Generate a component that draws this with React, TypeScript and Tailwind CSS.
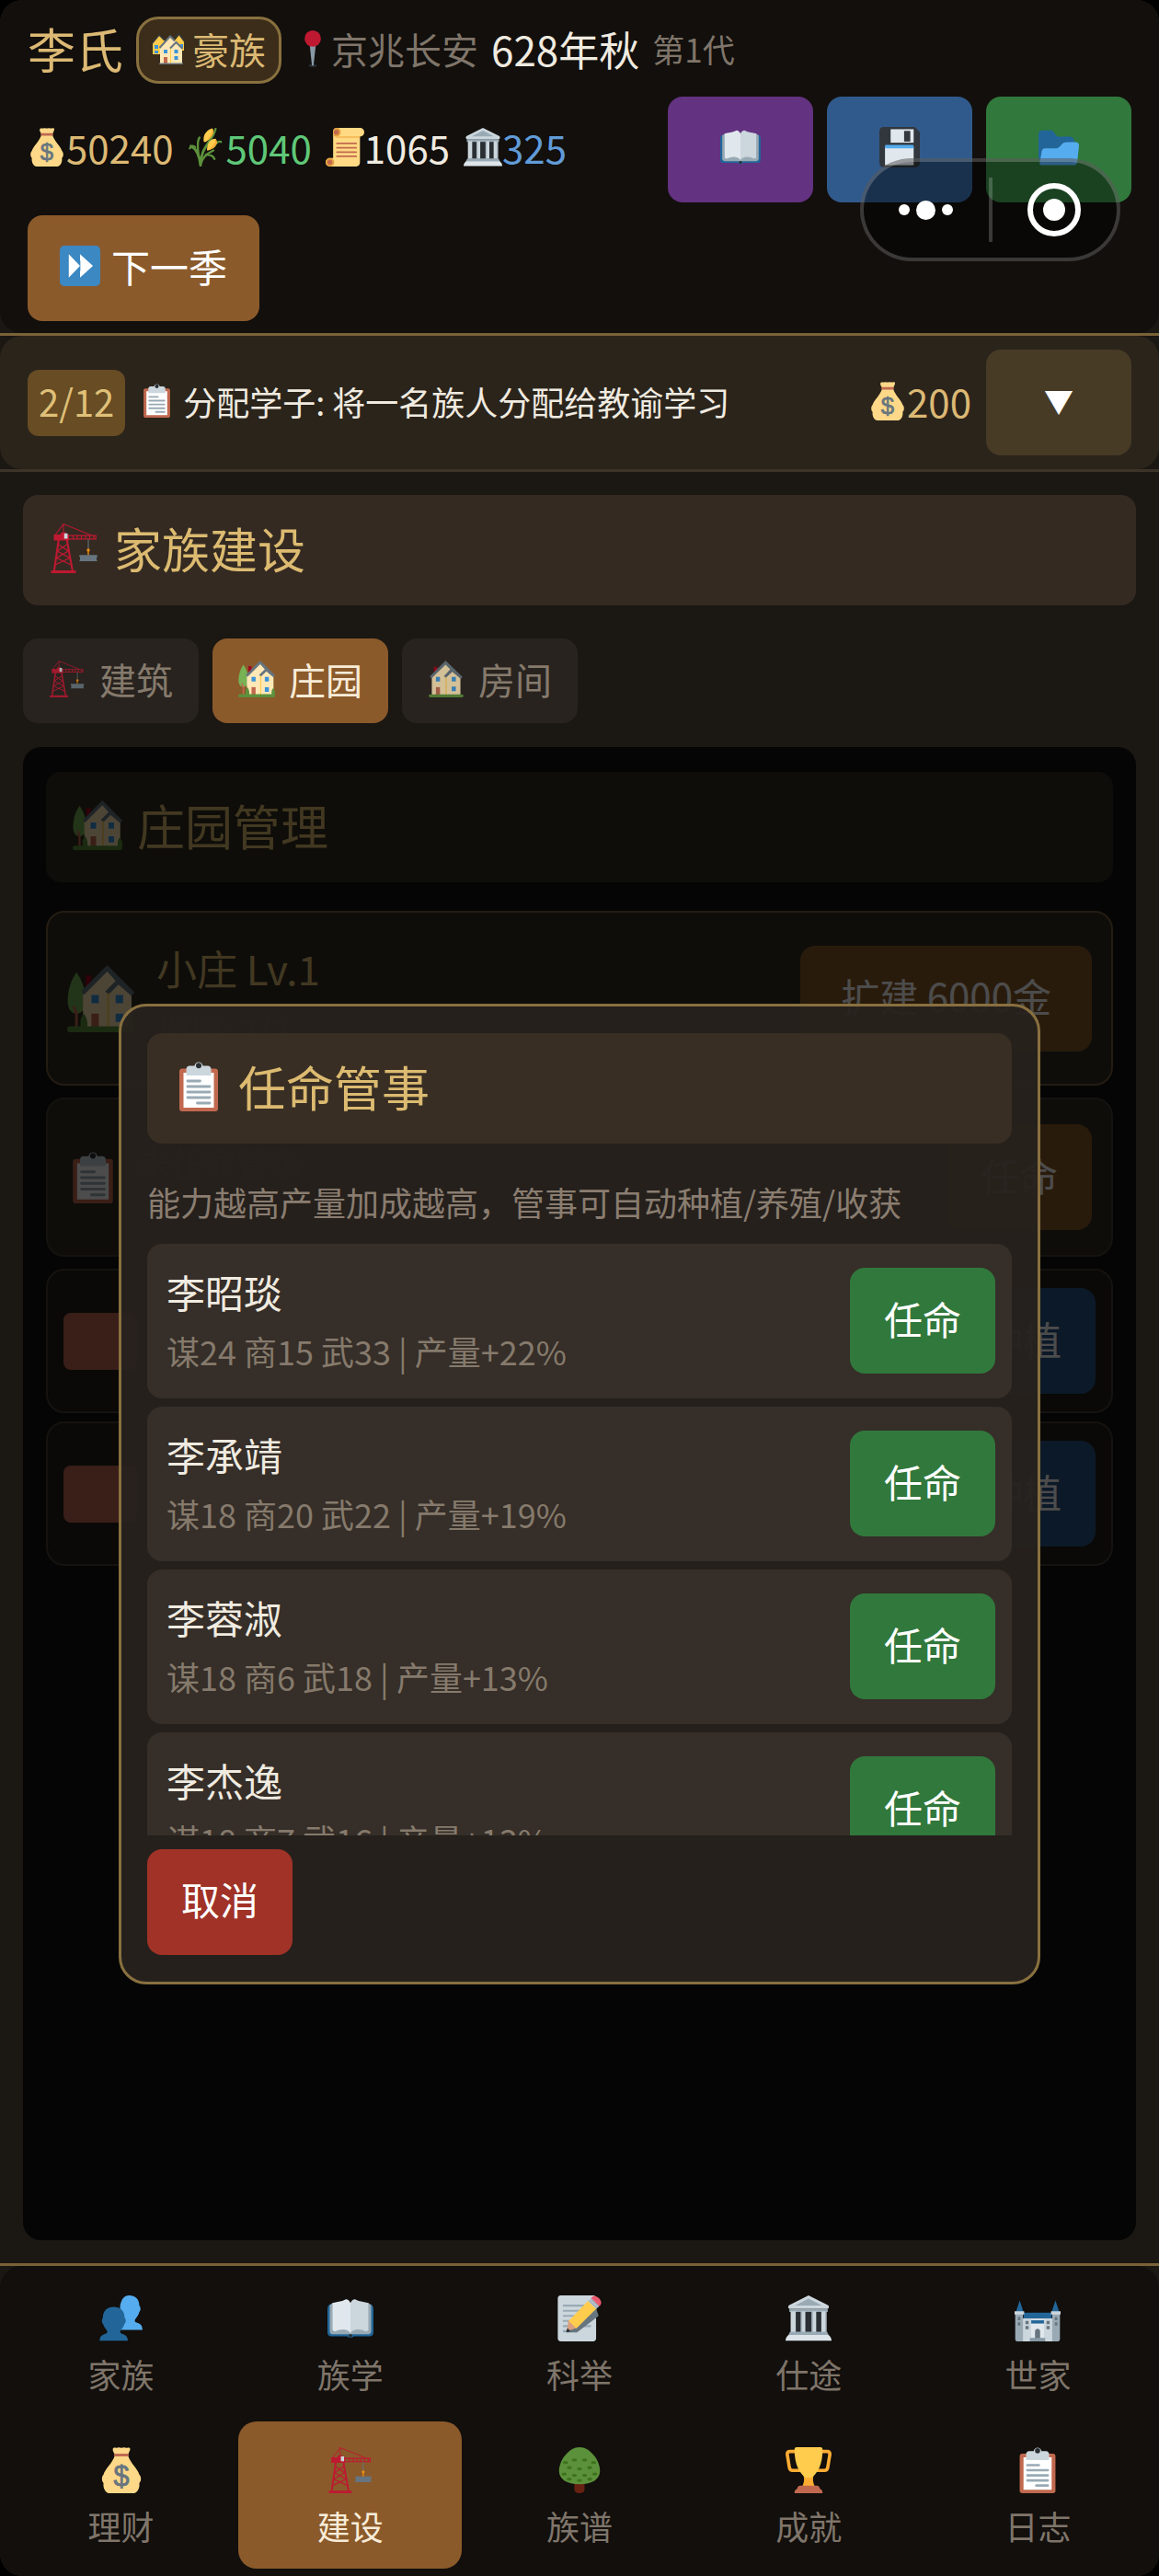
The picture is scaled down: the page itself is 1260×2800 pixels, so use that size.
import * as React from "react";
import { clsx } from "clsx";

type IconProps = { className?: string };

function Glyph({ className, children }: IconProps & { children: React.ReactNode }) {
  return (
    <svg viewBox="0 0 36 36" aria-hidden="true" className={clsx("shrink-0", className)}>
      {children}
    </svg>
  );
}

function MoneyBag({ className }: IconProps) {
  return (
    <Glyph className={className}>
      <path
        fill="#FDD888"
        d="M13 6C11 13 5 17 4 21.500C2.300 23 2.500 27 4 28C3.500 31.500 5 35 8 36H28C31 35 32.500 31.500 32 28C33.700 27 33.700 23 32 21.500C31 17 25 13 23 6Z"
      />
      <path
        fill="#FDD888"
        d="M11.300 1.200C12 -.4 13.600.9 15 .4C16.500-.2 17.500.9 19 .4C20.500-.2 21.500.9 23 .4C24.500 0 25.300 1 24.600 2.500L23.300 5.500H12.700L11.300 2.700Z"
      />
      <rect x="12.200" y="5" width="11.600" height="2.200" rx="1" fill="#BF6952" />
      <text
        x="18"
        y="30"
        textAnchor="middle"
        fill="#67757F"
        fontSize="22"
        fontFamily="Liberation Sans, sans-serif"
        stroke="#67757F"
        strokeWidth=".6"
      >
        $
      </text>
    </Glyph>
  );
}

function Corn({ className }: IconProps) {
  return (
    <Glyph className={className}>
      <g fill="none" stroke="#5C913B" strokeLinecap="round">
        <path strokeWidth="2.400" d="M12 35C11 26 9 20 3 17M12 35C12 25 15 20 20 13" />
        <path strokeWidth="2" d="M12 34C14 27 18 24 24 21M10 24C9 16 9 12 11 9M17 25C21 25 24 26 25 29M7 18C5 16 3 17 2 19M24 18C27 13 29 12 31 13M20 12C24 8 25 5 26 1" />
      </g>
      <path fill="#FFCC4D" d="M15 13C14 6 18 2 23 .5C26 4 22 10 17 13Z" />
      <path fill="#FFAC33" d="M17 13C21 9 23 5 23 .5C26 4 22 10 17 13Z" />
      <path fill="#FFCC4D" d="M18 21C18 14 21 10 26 10C29 14 26 19 19 21Z" />
      <path fill="#FFAC33" d="M19 21C24 17 26 14 26 10C29 14 26 19 19 21Z" />
    </Glyph>
  );
}

function Scroll({ className }: IconProps) {
  return (
    <Glyph className={className}>
      <path fill="#FFD983" d="M7 3C7 1 8.500 0 10.500 0H32C34.500 0 36 2 36 4S34.500 8 32 8V32C32 34.500 30.500 36 28.500 36H4C1.500 36 0 34.500 0 32S2 28 4 28H7Z" />
      <path fill="#F4B350" d="M8 8H32V9.300H10Z" />
      <path fill="#E39F3D" d="M10.500 0C13 0 14 2 14 4S12.500 8 10 8S7 6 7 4S8.500 0 10.500 0Z" />
      <circle cx="10" cy="4" r="2.300" fill="#C1694F" />
      <path fill="#E39F3D" d="M4 28C6.500 28 8 30 8 32S6.500 36 4 36S0 34 0 32S1.500 28 4 28Z" />
      <circle cx="4" cy="32" r="2.300" fill="#C1694F" />
      <path stroke="#C1694F" strokeWidth="1.500" strokeLinecap="round" d="M10.500 14.500H28.500M10.500 18.500H28.500M10.500 22.500H28.500M10.500 26.500H28.500" />
    </Glyph>
  );
}

function Temple({ className }: IconProps) {
  return (
    <Glyph className={className}>
      <path fill="#292F33" d="M5 11H31V30H5Z" />
      <path fill="#99AAB5" d="M3 10.500H33V13H3Z" />
      <path fill="#CCD6DD" d="M18 0L33 7.500C34.500 8.300 34 10.500 32.500 10.500H3.500C2 10.500 1.500 8.300 3 7.500Z" />
      <path fill="#99AAB5" d="M18 2.500L28.500 8H7.500Z" />
      <path fill="#CCD6DD" d="M4 12.500H8V29H4ZM12 12.500H15.500V29H12ZM20.500 12.500H24V29H20.500ZM28 12.500H32V29H28Z" />
      <path fill="#AAB8C2" d="M12 12.500H13V29H12ZM20.500 12.500H21.500V29H20.500ZM31 12.500H32V29H31Z" />
      <path fill="#9AAAB5" d="M3.500 28.500H32.500L34 31.500H2Z" />
      <path fill="#DDE5EA" d="M2.500 31H33.500C35 32 36 33.500 36 35.500H0C0 33.500 1 32 2.500 31Z" />
    </Glyph>
  );
}

function Book({ className }: IconProps) {
  return (
    <Glyph className={className}>
      <path fill="#226699" d="M2 7C.7 7.500 0 9 0 10.500V29C0 31 1 32 3 32H15.500C16 33.400 20 33.400 20.500 32H33C35 32 36 31 36 29V10.500C36 9 35.300 7.500 34 7Z" />
      <path fill="#99AAB5" d="M1.800 7.500L4 6H32L34.200 7.500V28C34.200 29.700 33 30.500 31.500 30.500H4.500C3 30.500 1.800 29.700 1.800 28Z" />
      <path fill="#E1E8ED" d="M18 6C17 3.800 15.500 2.800 14 3.200C11 5 7 4.800 4 6V26.500C4 27.800 5 28.200 6.500 28C10 26.500 15 25.500 18 29.500Z" />
      <path fill="#CCD6DD" d="M18 6C19 3.800 20.500 2.800 22 3.200C25 5 29 4.800 32 6V26.500C32 27.800 31 28.200 29.500 28C26 26.500 21 25.500 18 29.500Z" />
      <circle cx="18" cy="31.500" r="1.300" fill="#292F33" />
    </Glyph>
  );
}

function Floppy({ className }: IconProps) {
  return (
    <Glyph className={className}>
      <path fill="#31373D" d="M4 0H31.500L36 4.500V32C36 34.500 34.500 36 32 36H4C1.500 36 0 34.500 0 32V4C0 1.500 1.500 0 4 0Z" />
      <path fill="#E1E8ED" d="M10 2H30.500V14H10Z" />
      <path fill="#31373D" d="M22 3.500H27.500V13H22Z" />
      <path fill="#E1E8ED" d="M5 18H30.500V34H5Z" />
      <path fill="#55ACEE" d="M6 16H29.500C30.200 16 30.500 16.500 30.500 17V19H5V17C5 16.500 5.300 16 6 16Z" />
    </Glyph>
  );
}

function Folder({ className }: IconProps) {
  return (
    <Glyph className={className}>
      <path fill="#226699" d="M0 29V6C0 4 1.500 3 3.500 3H11C14 3 15 8.500 18 8.500H27C30 8.500 32 10 32 13V29Z" />
      <path fill="#55ACEE" d="M23 14C20 15 19 19 16 19H6.500C4 19 3 20 2.700 23L1 32C.8 33.500 1.500 34 3 34H31C33 34 34.300 33 34.500 31L36 17C36.200 14.500 35 13.500 33 13.500H25.500Z" />
    </Glyph>
  );
}

function FastForward({ className }: IconProps) {
  return (
    <Glyph className={className}>
      <rect width="36" height="36" rx="4" fill="#3B88C3" />
      <path fill="#FFF" d="M8 7.500L18 18L8 28.500ZM18 7.500L29.500 18L18 28.500Z" />
      <path fill="#3B88C3" d="M17 12L18.300 13.500V22.500L17 24L18 18Z" />
    </Glyph>
  );
}

function Clipboard({ className }: IconProps) {
  return (
    <Glyph className={className}>
      <path fill="#C1694F" d="M6 5H30C31.200 5 32 5.800 32 7V34C32 35.200 31.200 36 30 36H6C4.800 36 4 35.200 4 34V7C4 5.800 4.800 5 6 5Z" />
      <path fill="#FFF" d="M7 8H29V33.300H7Z" />
      <path fill="#CCD6DD" d="M11.500 3H15C15.500-.5 20.500-.5 21 3H24.500C26 3 27 4 27 5.500V10H9V5.500C9 4 10 3 11.500 3Z" />
      <circle cx="18" cy="2.800" r="2" fill="#292F33" />
      <path stroke="#99AAB5" strokeWidth="1.900" strokeLinecap="round" d="M10 14H19M10 18H26M10 22H26M10 26H26M17 30H26" />
    </Glyph>
  );
}

function Crane({ className }: IconProps) {
  return (
    <Glyph className={className}>
      <g fill="none" stroke="#BE1931">
        <path strokeWidth=".7" d="M3.500 9L10 .4L30 8.500M10 .4V8" />
        <path strokeWidth="1.400" d="M6.500 12L3.300 34M12.500 12L16.500 34" />
        <path strokeWidth=".9" d="M6 15L13.500 20L5 25L15.500 30M13 15L5.500 20L14.500 25L4 30" />
        <path strokeWidth=".8" d="M13 8.700H33.500V11.300H13M17 8.700V11.300M20 8.700V11.300M23 8.700V11.300M26 8.700V11.300M29 8.700V11.300M32 8.700V11.300" />
      </g>
      <path fill="#BE1931" d="M8 6.500H12V8H14V12.300H3V8H8ZM1 34H19V36H1Z" />
      <path fill="#CCD6DD" d="M10.500 7.200H13V11H10.500Z" />
      <path stroke="#66757F" strokeWidth=".7" d="M28 11.500V19" />
      <circle cx="28" cy="19.300" r="1.100" fill="#F4900C" />
      <path stroke="#F4900C" strokeWidth=".9" d="M28 20V23" />
      <path fill="#66757F" d="M21.500 22.800H34.500V24L34 25V26L34.500 27.300H21.500L22 26V24.500L21.500 23.800Z" />
    </Glyph>
  );
}

function House({ className }: IconProps) {
  return (
    <Glyph className={className}>
      <path fill="#A0041E" d="M6 6H9.500V15H6Z" />
      <path fill="#FFE8B6" d="M4 16L17 3L32 17V34H4Z" />
      <path fill="#66757F" d="M17.500 0L2 15.500L3.500 17.500L17.500 4L22 8.500L16 15L17.500 17L24 11L32.500 18L34 16Z" />
      <path stroke="#FFCC4D" strokeWidth="1" d="M18 16V34" />
      <path fill="#3B94D9" d="M8 16H12V20.500H8ZM23.500 16H27.500V20.500H23.500ZM23.500 25.500H27.500V30H23.500Z" />
      <path fill="#C1694F" d="M8 26H12V34H8Z" />
      <rect x="1" y="33" width="34" height="3" rx="1.500" fill="#5C913B" />
    </Glyph>
  );
}

function HouseGarden({ className }: IconProps) {
  return (
    <Glyph className={className}>
      <path fill="#A0041E" d="M10 5.500H13V13H10Z" />
      <path fill="#77B255" d="M5 4C2 8 .3 14 .3 19C.3 24 2.500 26 5 26S10 24 10 19C10 14 8 8 5 4Z" />
      <path stroke="#C1694F" strokeWidth="1.500" d="M5 25V33M3.500 22L5 26" />
      <path fill="#FFE8B6" d="M8.500 14L21.500 2L34.500 15V34H8.500Z" />
      <path fill="#66757F" d="M21.500 0L7.500 14L9 16L21.500 3.500L26 8.500L20.500 14L22 16L27.500 10.500L34.500 16.500L36 14.500Z" />
      <path stroke="#FFCC4D" strokeWidth="1" d="M22 15V34" />
      <path fill="#3B94D9" d="M13 16H17V20.500H13ZM26 16H30V20.500H26ZM26 26H30V30.500H26Z" />
      <path fill="#C1694F" d="M13 26H17V34H13Z" />
      <path fill="#5C913B" d="M7.500 34C6.500 30 7.500 27 9 26C10.500 28 11.500 31 10.500 34ZM33 34C32 30 33 28 34.300 27C36 29 36.500 32 35.500 34Z" />
      <rect x="0" y="32.800" width="36" height="3.200" rx="1.500" fill="#5C913B" />
    </Glyph>
  );
}

function Houses({ className }: IconProps) {
  return (
    <Glyph className={className}>
      <path fill="#FFCC4D" d="M1 11L8 3L14 9V24H1ZM25 9L30 3L35 9V20H25Z" />
      <path fill="none" stroke="#31373D" strokeWidth="1.500" d="M.5 12L8 3L14 9M24 6L29.500 2L35.500 10" />
      <path fill="#3B94D9" d="M3 14H7V18H3ZM3 20H7V23H3ZM31 13H34V17H31Z" />
      <path fill="#FFE8B6" d="M9 17L20 5L26 10L33 18V34H9Z" />
      <path fill="none" stroke="#66757F" strokeWidth="2" d="M8.500 17L20 4.500L25 9.500M20 17.500L26.500 11L33.500 18" />
      <path stroke="#FFCC4D" strokeWidth="1" d="M20.500 18V34" />
      <path fill="#3B94D9" d="M13 19H17V23H13ZM24.500 19H28.500V23H24.500ZM24.500 26H28.500V30H24.500Z" />
      <path fill="#C1694F" d="M13 27H17V34H13Z" />
      <path fill="#66757F" d="M8 33.500H34V35H8Z" />
    </Glyph>
  );
}

function Pin({ className }: IconProps) {
  return (
    <Glyph className={className}>
      <ellipse cx="18" cy="34.500" rx="4" ry="1.500" fill="#292F33" />
      <path fill="#8899A6" d="M15 14H21L18.800 34.500H17.200Z" />
      <circle cx="18" cy="8" r="8" fill="#BE1931" />
    </Glyph>
  );
}

function People({ className }: IconProps) {
  return (
    <Glyph className={className}>
      <path fill="#55ACEE" d="M24 0C29 0 32 3 32 8C33.300 9.500 33.300 12 32 13C31 17 28.500 18 28.500 20C28.500 22 34.500 20.500 34.500 27H17V8C18 3 20 0 24 0Z" />
      <path fill="#226699" d="M12 9C17 9 20.500 12 20.500 17.500C22 19 21.500 21.500 20.300 22.500C19.500 25.500 17 27 17 28.500C17 31 23 29.500 23 35.500H1C1 29.500 7 31 7 28.500C7 27 4.500 25.500 3.700 22.500C2.500 21.500 2.300 19 3.500 17.500C3.500 12 7 9 12 9Z" />
    </Glyph>
  );
}

function Memo({ className }: IconProps) {
  return (
    <Glyph className={className}>
      <rect width="30" height="36" x="1" rx="2.500" fill="#CCD6DD" />
      <path stroke="#99AAB5" strokeWidth="1.500" d="M5 8H27M5 12H27M5 16H27M5 20H27M5 24H27M5 28H12" />
      <path fill="#66757F" d="M31 10L33 16L16 29L8 29Z" />
      <path fill="#D99E82" d="M8 28L9.500 19L15.500 25.500Z" />
      <path fill="#292F33" d="M7.500 29L8.500 25.500L11 28Z" />
      <path fill="#FFCC4D" d="M9.500 20L25 4L31.500 10L15.500 26Z" />
      <path fill="#CCD6DD" d="M24.500 4.500L27 2L33.500 8L31 10.500Z" />
      <path fill="#EA596E" d="M27 2C28.500 0 31 0 33 2S36 6.500 33.500 8.500Z" />
      <path stroke="#99AAB5" strokeWidth="1" d="M25.500 4L31.800 10M26.800 2.800L33 9" />
    </Glyph>
  );
}

function Castle({ className }: IconProps) {
  return (
    <Glyph className={className}>
      <path fill="#226699" d="M4 4L7 13H1ZM32 4L35 13H29ZM7 13.500H29V19H7Z" />
      <path fill="#99AAB5" d="M.5 13H6.500V36H2C1 36 .5 35 .5 34ZM29.500 13H35.500V34C35.500 35 35 36 34 36H29.500Z" />
      <path fill="#CCD6DD" d="M0 12.500H7.500V15H0ZM28.500 12.500H36V15H28.500ZM6.500 18H29.500V36H6.500Z" />
      <path fill="#E1E8ED" d="M13 20L15 19H21L23 20V33H13Z" />
      <path fill="#226699" d="M13 19.500H23V22H13Z" />
      <path fill="#66757F" d="M2.500 17H4.500V19.500H2.500ZM2.500 21H4.500V23.500H2.500ZM31.500 17H33.500V19.500H31.500ZM31.500 21H33.500V23.500H31.500ZM8.500 20H11V22.500H8.500ZM8.500 24H11V26.500H8.500ZM25 20H27.500V22.500H25ZM25 24H27.500V26.500H25ZM16 28C16 25.500 20 25.500 20 28V34H16Z" />
      <path fill="#8899A6" d="M12 33.300H24V36H12Z" />
    </Glyph>
  );
}

function Tree({ className }: IconProps) {
  return (
    <Glyph className={className}>
      <path fill="#662113" d="M14 27H22V33C22 35 20.500 36 18 36S14 35 14 33Z" />
      <path fill="#5C913B" d="M18 0C10 0 2 10 2 18.500C2 25 8 29 18 29S34 25 34 18.500C34 10 26 0 18 0Z" />
      <g fill="#3E721D">
        <ellipse cx="14" cy="10" rx="2" ry="1.200" />
        <ellipse cx="22" cy="10" rx="2" ry="1.200" />
        <ellipse cx="7" cy="12" rx="2" ry="1.200" />
        <ellipse cx="29" cy="12" rx="2" ry="1.200" />
        <ellipse cx="10" cy="16" rx="2" ry="1.200" />
        <ellipse cx="18" cy="17" rx="2" ry="1.200" />
        <ellipse cx="26" cy="16" rx="2" ry="1.200" />
        <ellipse cx="6" cy="21" rx="2" ry="1.200" />
        <ellipse cx="14" cy="22" rx="2" ry="1.200" />
        <ellipse cx="22" cy="22" rx="2" ry="1.200" />
        <ellipse cx="30" cy="21" rx="2" ry="1.200" />
        <ellipse cx="10" cy="25" rx="2" ry="1.200" />
        <ellipse cx="18" cy="26" rx="2" ry="1.200" />
        <ellipse cx="26" cy="25" rx="2" ry="1.200" />
      </g>
    </Glyph>
  );
}

function Trophy({ className }: IconProps) {
  return (
    <Glyph className={className}>
      <path fill="none" stroke="#FFAC33" strokeWidth="2.600" d="M9 3.300H3.500C2 3.300 1.300 4 1.300 5.500L3 16C3.300 17.500 4 18.200 5.500 18.200H12M27 3.300H32.500C34 3.300 34.700 4 34.700 5.500L33 16C32.700 17.500 32 18.200 30.500 18.200H24" />
      <path fill="#FFAC33" d="M14 22H22C21 25 21.500 28 23 31H13C14.500 28 15 25 14 22Z" />
      <path fill="#FFCC4D" d="M8.500 0H27.500C28.500 0 29 1 29 2C29 14 25 20 20.500 24H15.500C11 20 7 14 7 2C7 1 7.500 0 8.500 0Z" />
      <path fill="#C1694F" d="M11.500 30H24.500C26 30 26.500 31 27 32.500C28.500 33 29 34 29 36H7C7 34 7.500 33 9 32.500C9.500 31 10 30 11.500 30Z" />
    </Glyph>
  );
}

const resources = [
  { icon: MoneyBag, value: "50240", color: "text-[#dcb974]" },
  { icon: Corn, value: "5040", color: "text-[#5fc878]" },
  { icon: Scroll, value: "1065", color: "text-[#f0ebe0]" },
  { icon: Temple, value: "325", color: "text-[#619bd8]" },
];

const headerActions = [
  { icon: Book, label: "图鉴", color: "bg-[#633280]" },
  { icon: Floppy, label: "存档", color: "bg-[#315a8c]" },
  { icon: Folder, label: "读档", color: "bg-[#31783c]" },
];

const tabs = [
  { icon: Crane, label: "建筑", dim: "opacity-80" },
  { icon: HouseGarden, label: "庄园", dim: "" },
  { icon: House, label: "房间", dim: "opacity-80" },
];

const candidates = [
  { name: "李昭琰", stats: "谋24 商15 武33 | 产量+22%" },
  { name: "李承靖", stats: "谋18 商20 武22 | 产量+19%" },
  { name: "李蓉淑", stats: "谋18 商6 武18 | 产量+13%" },
  { name: "李杰逸", stats: "谋18 商7 武16 | 产量+13%" },
];

const navItems = [
  { icon: People, label: "家族" },
  { icon: Book, label: "族学" },
  { icon: Memo, label: "科举" },
  { icon: Temple, label: "仕途" },
  { icon: Castle, label: "世家" },
  { icon: MoneyBag, label: "理财" },
  { icon: Crane, label: "建设" },
  { icon: Tree, label: "族谱" },
  { icon: Trophy, label: "成就" },
  { icon: Clipboard, label: "日志" },
];

function GameButton({
  className,
  children,
  ...rest
}: React.ButtonHTMLAttributes<HTMLButtonElement>) {
  return (
    <button
      type="button"
      className={clsx(
        "flex h-[115px] min-w-[158px] shrink-0 items-center justify-center rounded-2xl pb-[6px] text-[42px] leading-none text-white",
        className
      )}
      {...rest}
    >
      {children}
    </button>
  );
}

function SectionTitle({
  icon: Icon,
  className,
  children,
}: {
  icon: React.ComponentType<IconProps>;
  className?: string;
  children: React.ReactNode;
}) {
  return (
    <h2
      className={clsx(
        "flex h-[120px] items-center gap-[16px] rounded-2xl px-[29px] pb-1 text-[52px] leading-none text-[#dcbb71]",
        className
      )}
    >
      <Icon className="size-[54px]" />
      {children}
    </h2>
  );
}

function Header() {
  return (
    <header className="relative flex flex-col gap-[14px] rounded-[24px] bg-[#120f0c] px-[30px] pt-[18px] pb-[13px]">
      <div className="flex h-[73px] items-center gap-[14px] leading-none whitespace-nowrap">
        <h1 className="pb-1 text-[52px] text-[#dcb974]">李氏</h1>
        <span className="flex h-[73px] items-center gap-2 rounded-[24px] border-[3px] border-[#88703f] bg-[#3b2d1a] px-[14px] pb-[3px] text-[40px] text-[#dcb974]">
          <Houses className="size-[36px]" />
          豪族
        </span>
        <span className="flex items-center pb-1 text-[40px] text-[#7f756a]">
          <Pin className="size-[40px]" />
          京兆长安
        </span>
        <span className="pb-1 text-[44px] text-[#f0ebe0]">628年秋</span>
        <span className="pb-1 text-[35px] text-[#7f756a]">第1代</span>
      </div>

      <div className="flex items-center justify-between">
        <div className="flex items-center gap-[15px] pb-[6px] text-[42px] leading-none">
          {resources.map(({ icon: Icon, value, color }) => (
            <span key={value} className={clsx("flex items-center", color)}>
              <Icon className="size-[42px]" />
              {value}
            </span>
          ))}
        </div>
        <div className="flex gap-[15px]">
          {headerActions.map(({ icon: Icon, label, color }) => (
            <GameButton key={label} aria-label={label} className={color}>
              <Icon className="size-[44px]" />
            </GameButton>
          ))}
        </div>
      </div>

      <GameButton className="gap-[12px] self-start bg-[#8b5a2b] px-[35px]">
        <FastForward className="size-[44px]" />
        下一季
      </GameButton>

      {/* Host app capsule floats over the action row */}
      <div className="absolute top-[172px] right-[42px] flex h-[112px] w-[283px] items-center rounded-full border-4 border-white/20 bg-black/45">
        <button type="button" aria-label="更多" className="flex flex-1 items-center justify-center gap-[7px]">
          <span className="size-[12px] rounded-full bg-white" />
          <span className="size-[21px] rounded-full bg-white" />
          <span className="size-[12px] rounded-full bg-white" />
        </button>
        <span className="h-[70px] w-1 bg-white/20" />
        <button type="button" aria-label="关闭" className="flex flex-1 justify-center">
          <span className="flex size-[58px] items-center justify-center rounded-full border-[6px] border-white">
            <span className="size-[24px] rounded-full bg-white" />
          </span>
        </button>
      </div>
    </header>
  );
}

function QuestBar() {
  return (
    <div className="border-y-[3px] border-t-[#796238] border-b-[#3d3429]">
      <div className="flex items-center gap-[16px] rounded-[24px] bg-[#2b241b] px-[30px] py-[15px] leading-none">
        <span className="flex h-[72px] items-center rounded-xl bg-[#674c24] px-[12px] pb-1 text-[40px] text-[#dfc078]">
          2/12
        </span>
        <p className="flex flex-1 items-center gap-[10px] pb-1 text-[36px] text-[#f0ebe0]">
          <Clipboard className="size-[37px]" />
          分配学子: 将一名族人分配给教谕学习
        </p>
        <span className="flex items-center pb-1 text-[42px] text-[#dcb974]">
          <MoneyBag className="size-[42px]" />
          200
        </span>
        <GameButton aria-label="展开任务" className="bg-[#473b26]">
          <span className="text-[32px]">▼</span>
        </GameButton>
      </div>
    </div>
  );
}

function ManorCards() {
  return (
    <div className="flex flex-col gap-[13px]">
      <div className="flex items-center gap-[24px] rounded-[20px] border-2 border-[#785f3c] bg-[#312d24] px-[21px] py-[27px]">
        <HouseGarden className="size-[73px]" />
        <div className="flex-1 text-[#dcbb71]">
          <h3 className="text-[44px] leading-[66px]">小庄 Lv.1</h3>
          <p className="text-[36px] leading-[66px] text-[#857a6c]">地块: 2/2</p>
        </div>
        <GameButton className="bg-[#8b5a2b] px-[44px]">扩建 6000金</GameButton>
      </div>

      <div className="flex items-center gap-[20px] rounded-[20px] border-2 border-[#463f32] bg-[#312d24] px-[21px] py-[27px]">
        <Clipboard className="size-[56px]" />
        <p className="flex-1 self-start text-[36px] leading-[80px] text-[#857a6c]">未任命管事</p>
        <GameButton className="bg-[#8b5a2b]">任命</GameButton>
      </div>

      <ul className="flex flex-col gap-[9px]">
        {["一号田", "二号田"].map((plot) => (
          <li
            key={plot}
            className="flex items-center gap-[16px] rounded-[20px] border-2 border-[#463f32] bg-[#221f18] px-[17px] py-[19px]"
          >
            <span className="h-[62px] w-[80px] rounded-lg bg-[#c16453]" />
            <span className="flex-1" />
            <GameButton aria-label={`${plot} 种植`} className="bg-[#2b5685]">
              种植
            </GameButton>
          </li>
        ))}
      </ul>
    </div>
  );
}

function AppointDialog({ onClose }: { onClose: () => void }) {
  return (
    <div
      role="dialog"
      aria-modal="true"
      aria-label="任命管事"
      className="w-full rounded-[30px] border-[3px] border-[#88703f] bg-[#27221d]/95 px-[28px] py-[29px]"
    >
      <SectionTitle icon={Clipboard} className="bg-[#382e24]">
        任命管事
      </SectionTitle>
      <p className="mt-[36px] mb-[19px] text-[36px] leading-[54px] text-[#8a7d70]">
        能力越高产量加成越高，管事可自动种植/养殖/收获
      </p>

      <ul className="flex max-h-[643px] flex-col gap-[9px] overflow-y-auto [scrollbar-width:none]">
        {candidates.map(({ name, stats }) => (
          <li
            key={name}
            className="flex shrink-0 items-center justify-between rounded-2xl bg-[#362e28] py-[20px] pr-[18px] pl-[21px]"
          >
            <div>
              <h3 className="text-[42px] leading-[64px] text-[#f0ebe0]">{name}</h3>
              <p className="text-[36px] leading-[64px] text-[#857a6c]">{stats}</p>
            </div>
            <GameButton aria-label={`任命 ${name}`} className="bg-[#31783c]">
              任命
            </GameButton>
          </li>
        ))}
      </ul>

      <GameButton onClick={onClose} className="mt-[15px] bg-[#a03228]">
        取消
      </GameButton>
    </div>
  );
}

export default function App() {
  const [tab, setTab] = React.useState("庄园");
  const [page, setPage] = React.useState("建设");
  const [appointing, setAppointing] = React.useState(true);

  return (
    <div className="bg-black font-['Noto_Sans_CJK_SC',sans-serif]">
      <div className="flex min-h-screen flex-col overflow-hidden rounded-[24px] bg-[#1b1713]">
        <Header />
        <QuestBar />

        <main className="flex flex-1 flex-col p-[25px]">
          <SectionTitle icon={Crane} className="bg-[#342a22]">
            家族建设
          </SectionTitle>

          <div className="mt-[36px] flex gap-[15px]">
            {tabs.map(({ icon: Icon, label, dim }) => (
              <button
                key={label}
                type="button"
                onClick={() => setTab(label)}
                className={clsx(
                  "flex h-[92px] items-center gap-[15px] rounded-2xl px-[28px] pb-1 text-[40px] leading-none",
                  tab === label ? "bg-[#8b5a2b] text-[#f8ecd8]" : "bg-[#28231f] text-[#857a6c]"
                )}
              >
                <Icon className={clsx("size-[40px]", dim)} />
                {label}
              </button>
            ))}
          </div>

          <section className="relative mt-[26px] flex-1 overflow-hidden rounded-[20px] bg-[#111111] px-[25px] py-[27px]">
            <SectionTitle icon={HouseGarden} className="mb-[31px] bg-[#322d20]">
              庄园管理
            </SectionTitle>
            <ManorCards />

            {appointing && (
              <div className="absolute inset-0 flex items-center justify-center bg-black/70 px-[104px]">
                <AppointDialog onClose={() => setAppointing(false)} />
              </div>
            )}
          </section>
        </main>

        <div className="border-t-[3px] border-[#796238]">
          <nav className="grid grid-cols-5 gap-x-[6px] gap-y-[5px] rounded-[24px] bg-[#120f0c] px-[10px] pt-[4px] pb-[8px]">
            {navItems.map(({ icon: Icon, label }) => (
              <button
                key={label}
                type="button"
                onClick={() => setPage(label)}
                className={clsx(
                  "flex h-[160px] flex-col items-center justify-center gap-[8px] rounded-[20px] pt-[8px] text-[36px] leading-[54px]",
                  page === label ? "bg-[#8b5a2b] text-[#f8ecd8]" : "text-[#7f756a]"
                )}
              >
                <Icon className="size-[50px]" />
                {label}
              </button>
            ))}
          </nav>
        </div>
      </div>
    </div>
  );
}
